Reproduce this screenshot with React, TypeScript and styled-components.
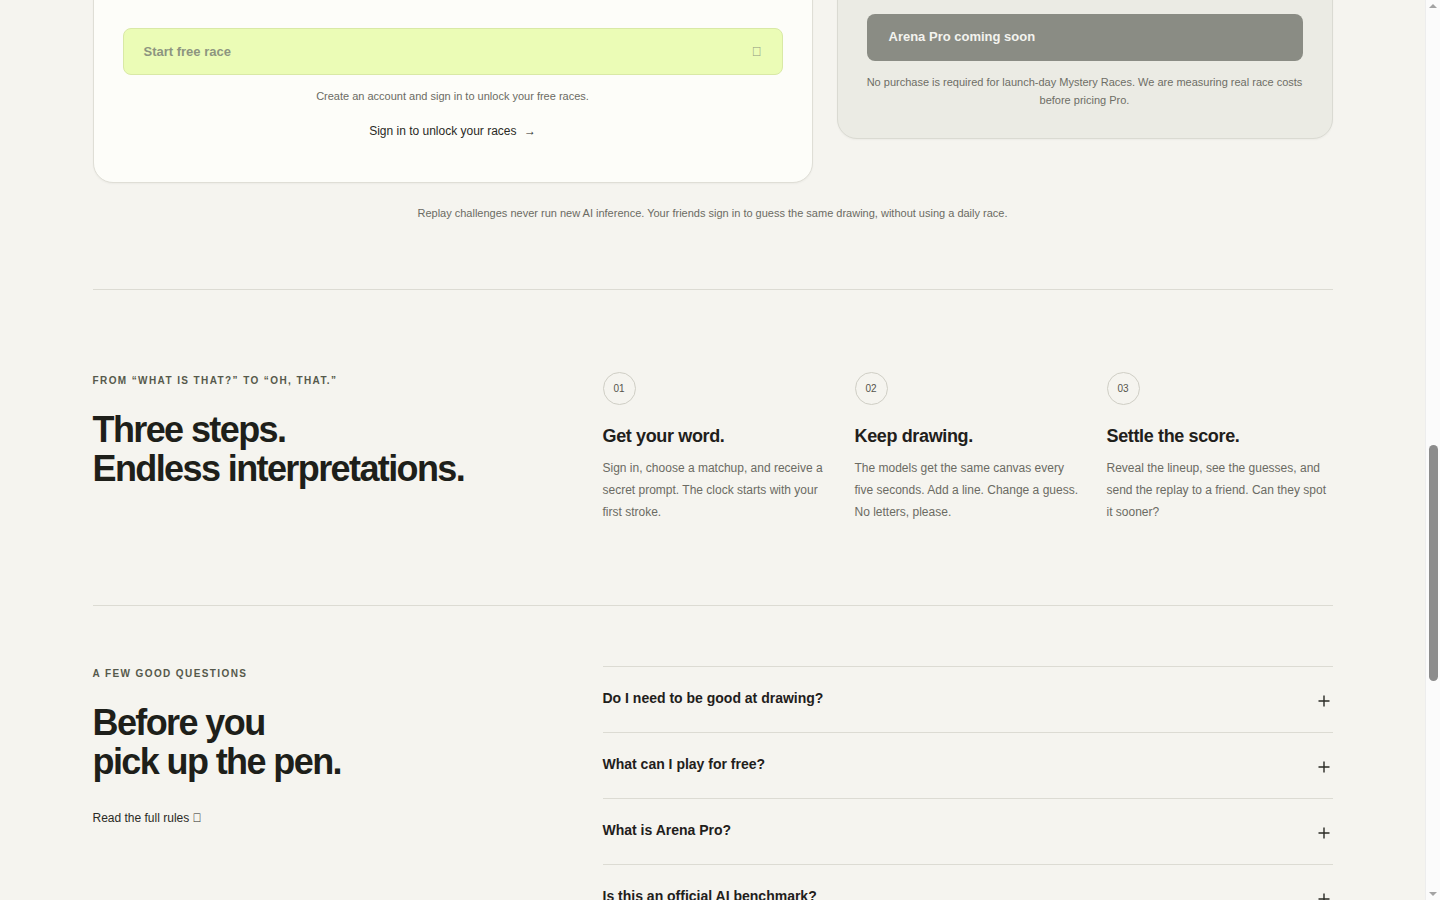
import React from 'react';
import styled, { createGlobalStyle } from 'styled-components';

const GlobalStyle = createGlobalStyle`
  body {
    margin: 0;
    padding-right: 15px;
    background: #f5f4ef;
    font-family: "Liberation Sans", Arial, sans-serif;
    color: #1f201b;
  }
  * {
    box-sizing: border-box;
  }
`;

const steps = [
    {
        num: '01',
        title: 'Get your word.',
        body: 'Sign in, choose a matchup, and receive a secret prompt. The clock starts with your first stroke.',
    },
    {
        num: '02',
        title: 'Keep drawing.',
        body: 'The models get the same canvas every five seconds. Add a line. Change a guess. No letters, please.',
    },
    {
        num: '03',
        title: 'Settle the score.',
        body: 'Reveal the lineup, see the guesses, and send the replay to a friend. Can they spot it sooner?',
    },
];

const questions = [
    'Do I need to be good at drawing?',
    'What can I play for free?',
    'What is Arena Pro?',
    'Is this an official AI benchmark?',
];

const PlusIcon = () => (
    <svg width="12" height="12" viewBox="0 0 12 12" fill="none">
        <path d="M6 0.5v11M0.5 6h11" stroke="#2a2a25" strokeWidth="1.4" />
    </svg>
);

const App = () => {
    return (
        <>
            <GlobalStyle />
            <Page>
                <Pricing>
                    <FreeCard>
                        <StartButton>
                            <span>Start free race</span>
                            <Tofu>{'\uE5C8'}</Tofu>
                        </StartButton>
                        <SmallNote>Create an account and sign in to unlock your free races.</SmallNote>
                        <SignInLink>
                            Sign in to unlock your races <Arrow>→</Arrow>
                        </SignInLink>
                    </FreeCard>
                    <ProCard>
                        <ProButton>Arena Pro coming soon</ProButton>
                        <ProNote>
                            No purchase is required for launch-day Mystery Races. We are measuring real race costs
                            before pricing Pro.
                        </ProNote>
                    </ProCard>
                </Pricing>
                <ReplayNote>
                    Replay challenges never run new AI inference. Your friends sign in to guess the same drawing,
                    without using a daily race.
                </ReplayNote>

                <StepsSection>
                    <Intro $offset={2}>
                        <Eyebrow>From “what is that?” to “oh, that.”</Eyebrow>
                        <Heading>
                            Three steps.
                            <br />
                            Endless interpretations.
                        </Heading>
                    </Intro>
                    <StepsGrid>
                        {steps.map((s) => (
                            <Step key={s.num}>
                                <StepNum>{s.num}</StepNum>
                                <StepTitle>{s.title}</StepTitle>
                                <StepBody>{s.body}</StepBody>
                            </Step>
                        ))}
                    </StepsGrid>
                </StepsSection>

                <FaqSection>
                    <Intro $offset={1}>
                        <Eyebrow>A few good questions</Eyebrow>
                        <Heading>
                            Before you
                            <br />
                            pick up the pen.
                        </Heading>
                        <RulesLink>
                            Read the full rules <Tofu $tight>{'\uE5C8'}</Tofu>
                        </RulesLink>
                    </Intro>
                    <FaqList>
                        {questions.map((q) => (
                            <FaqItem key={q}>
                                <Question>{q}</Question>
                                <PlusWrap>
                                    <PlusIcon />
                                </PlusWrap>
                            </FaqItem>
                        ))}
                    </FaqList>
                </FaqSection>
            </Page>
            <ScrollRail>
                <RailArrow $up />
                <RailThumb />
                <RailArrow />
            </ScrollRail>
        </>
    );
};

export default App;

const Page = styled.div`
    max-width: 1240px;
    margin: 0 auto;
    padding-bottom: 120px;
`;

const Pricing = styled.div`
    display: grid;
    grid-template-columns: 720px 1fr;
    gap: 24px;
    align-items: start;
    margin-top: -24px;
`;

const FreeCard = styled.div`
    background: #fdfdf9;
    border: 1px solid #dfded6;
    border-radius: 20px;
    padding: 51px 29px 43px;
    display: flex;
    flex-direction: column;
    align-items: center;
    box-shadow: 0 1px 2px rgba(0, 0, 0, 0.04);
`;

const StartButton = styled.div`
    width: 100%;
    height: 47px;
    display: flex;
    align-items: center;
    justify-content: space-between;
    padding: 0 20px 0 20px;
    background: #ebfcb6;
    border: 1px solid #d9e9a6;
    border-radius: 8px;
    color: #8d9580;
    font-size: 13px;
    font-weight: 700;
`;

const Tofu = styled.span<{ $tight?: boolean }>`
    font-family: "Liberation Sans", Arial, sans-serif;
    font-weight: 400;
    margin-left: ${(p) => (p.$tight ? '0' : '4px')};
`;

const SmallNote = styled.p`
    margin: 13px 0 0;
    font-size: 11px;
    line-height: 16px;
    color: #6b6b63;
`;

const SignInLink = styled.a`
    margin-top: 19px;
    font-size: 12px;
    line-height: 16px;
    color: #2a2a25;
    text-decoration: none;
`;

const Arrow = styled.span`
    margin-left: 4px;
`;

const ProCard = styled.div`
    background: #ebebe4;
    border: 1px solid #dadad2;
    border-radius: 20px;
    padding: 37px 29px 29px;
    box-shadow: 0 1px 2px rgba(0, 0, 0, 0.04);
`;

const ProButton = styled.div`
    height: 47px;
    display: flex;
    align-items: center;
    padding: 0 22px 2px;
    background: #8a8c84;
    border-radius: 8px;
    color: #f3f3ee;
    font-size: 13px;
    font-weight: 700;
`;

const ProNote = styled.p`
    margin: 12px 0 0;
    font-size: 11px;
    line-height: 18px;
    color: #6e6e66;
    text-align: center;
`;

const ReplayNote = styled.p`
    margin: 22px 0 0;
    padding-bottom: 68px;
    border-bottom: 1px solid #dcdbd3;
    font-size: 11px;
    line-height: 16px;
    color: #6b6b63;
    text-align: center;
`;

const Section = styled.section`
    display: grid;
    grid-template-columns: 486px 1fr;
    gap: 24px;
    align-items: start;
`;

const StepsSection = styled(Section)`
    padding: 82px 0 82px;
    border-bottom: 1px solid #dcdbd3;
`;

const FaqSection = styled(Section)`
    padding: 60px 0 0;
`;

const Intro = styled.div<{ $offset: number }>`
    padding-top: ${(p) => p.$offset}px;
`;

const Eyebrow = styled.div`
    font-size: 10px;
    line-height: 14px;
    font-weight: 700;
    letter-spacing: 0.14em;
    text-transform: uppercase;
    color: #56594b;
`;

const Heading = styled.h2`
    margin: 22px 0 0;
    font-size: 36px;
    line-height: 39px;
    font-weight: 700;
    letter-spacing: -1.6px;
    color: #1e1f1a;
`;

const StepsGrid = styled.div`
    display: grid;
    grid-template-columns: repeat(3, 1fr);
    gap: 26px;
`;

const Step = styled.div`
    display: flex;
    flex-direction: column;
    align-items: flex-start;
`;

const StepNum = styled.div`
    width: 33px;
    height: 33px;
    border: 1px solid #cfcec5;
    border-radius: 50%;
    display: flex;
    align-items: center;
    justify-content: center;
    font-size: 10px;
    color: #55554d;
`;

const StepTitle = styled.h3`
    margin: 20px 0 0;
    font-size: 18px;
    line-height: 22px;
    font-weight: 700;
    letter-spacing: -0.02em;
    color: #1f201b;
`;

const StepBody = styled.p`
    margin: 10px 0 0;
    font-size: 12px;
    line-height: 22px;
    color: #6b6b63;
`;

const RulesLink = styled.a`
    display: inline-block;
    margin-top: 29px;
    font-size: 12px;
    line-height: 16px;
    color: #2a2a25;
    text-decoration: none;
`;

const FaqList = styled.div`
    display: flex;
    flex-direction: column;
`;

const FaqItem = styled.div`
    display: flex;
    align-items: flex-start;
    justify-content: space-between;
    border-top: 1px solid #dcdbd3;
    padding: 22px 3px 25px 0;
`;

const Question = styled.span`
    font-size: 14px;
    line-height: 18px;
    font-weight: 700;
    color: #1f201b;
`;

const PlusWrap = styled.span`
    display: flex;
    margin-top: 6px;
`;

/* browser scrollbar, page is shown mid-scroll */
const ScrollRail = styled.div`
    position: fixed;
    top: 0;
    right: 0;
    width: 15px;
    height: 100vh;
    background: #fbfbfb;
    border-left: 1px solid #ededed;
    display: flex;
    flex-direction: column;
    align-items: center;
    justify-content: space-between;
    padding: 4px 0;
`;

const RailThumb = styled.div`
    width: 9px;
    height: 236px;
    margin-top: 437px;
    margin-bottom: auto;
    border-radius: 5px;
    background: #8c8c8c;
`;

const RailArrow = styled.div<{ $up?: boolean }>`
    width: 0;
    height: 0;
    border-left: 4px solid transparent;
    border-right: 4px solid transparent;
    ${(p) => (p.$up ? 'border-bottom: 4px solid #a3a3a3;' : 'border-top: 4px solid #a3a3a3;')}
`;
